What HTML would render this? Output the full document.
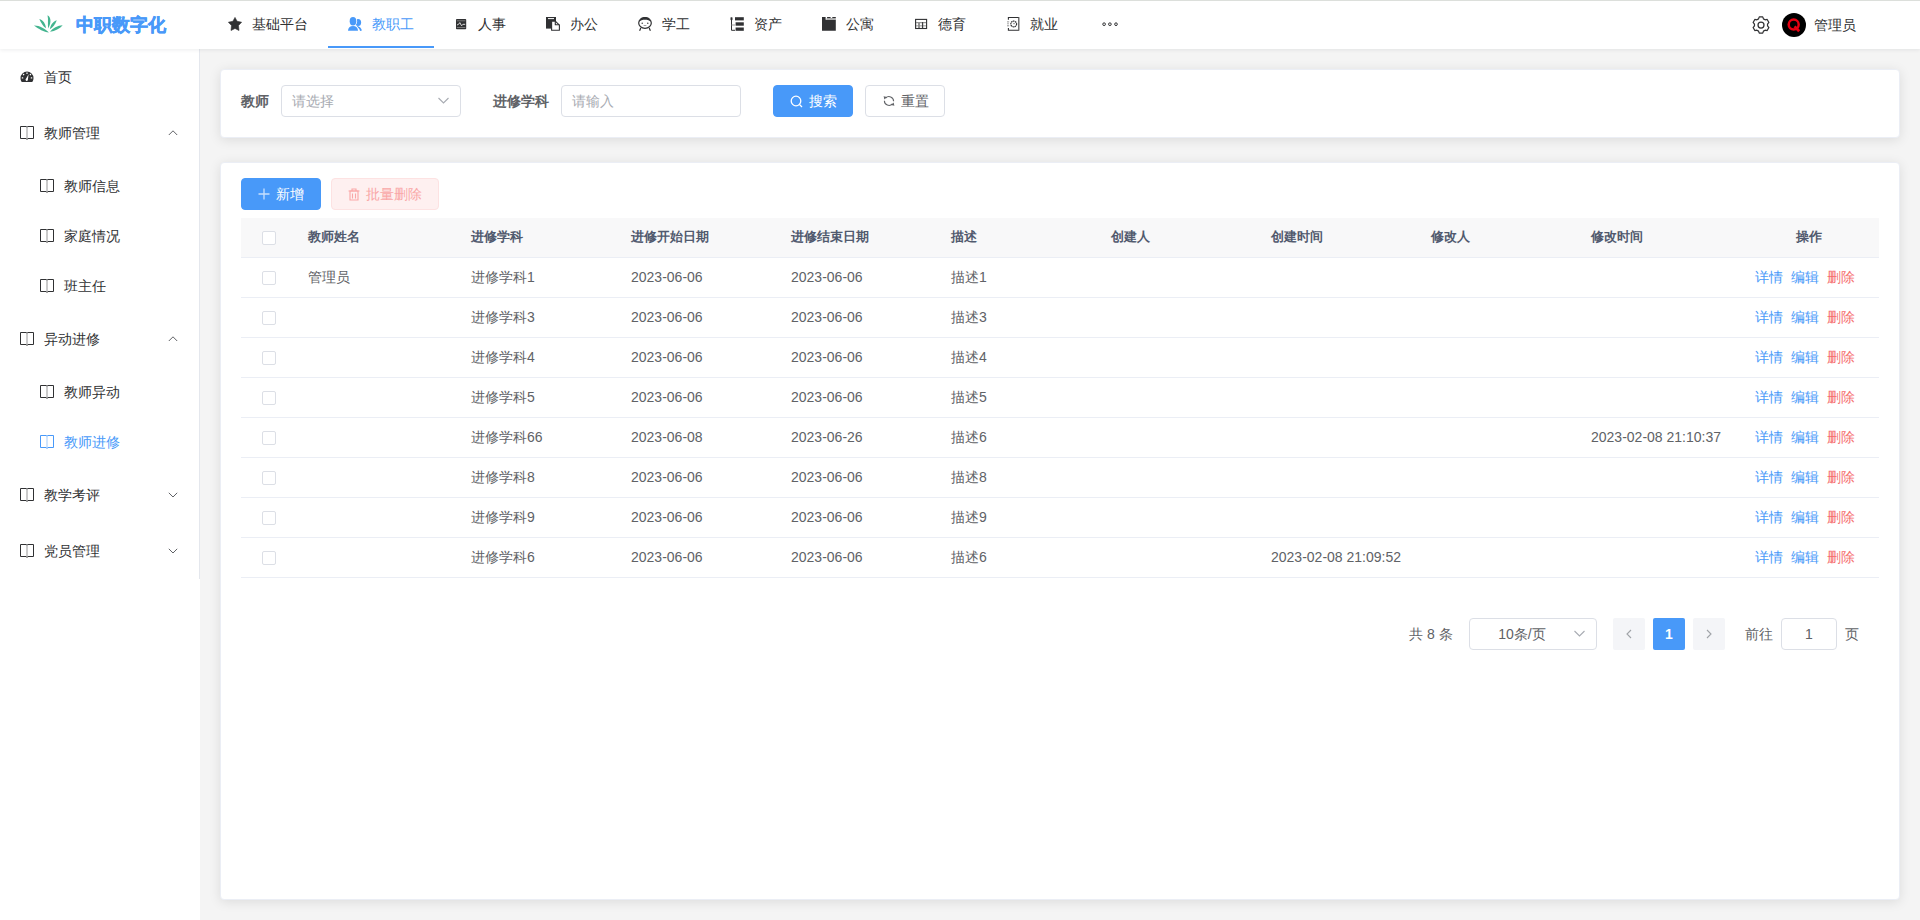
<!DOCTYPE html>
<html><head><meta charset="utf-8"><style>
*{box-sizing:border-box;margin:0;padding:0}
html,body{width:1920px;height:920px;overflow:hidden}
body{position:relative;font-family:"Liberation Sans",sans-serif;font-size:14px;color:#303133;background:#f4f4f4}
.abs{position:absolute}
#hdr{position:absolute;left:0;top:0;width:1920px;height:49px;background:#fff;border-top:1px solid #dcdfdb;box-shadow:0 1px 4px rgba(0,21,41,.08);z-index:3}
.logo-t{position:absolute;left:76px;top:12px;font-size:18px;font-weight:bold;color:#4899f9;line-height:24px;white-space:nowrap;-webkit-text-stroke:.5px #4899f9}
.nav{position:absolute;top:0;height:48px;white-space:nowrap;color:#303133}
.nav svg{position:absolute;top:16px;left:20px}
.nav .tx{position:absolute;left:44px;top:13px;line-height:20px}
.nav.act{color:#4899f9}
.nav.act:after{content:"";position:absolute;left:0;right:0;top:45px;height:2px;background:#4899f9}
#side{position:absolute;left:0;top:49px;width:200px;height:871px;background:#fff;z-index:2}
#side .bd{position:absolute;left:199px;top:0;width:1px;height:530px;background:#e4e7ed}
.mi{position:absolute;left:0;width:199px;white-space:nowrap;color:#303133}
.mi svg.ic{position:absolute;top:50%;margin-top:-7px}
.mi .tx{position:absolute;line-height:20px;top:50%;margin-top:-10px}
.mi svg.ar{position:absolute;left:168px;top:50%;margin-top:-4px}
.card{position:absolute;left:220px;width:1680px;background:#fff;border-radius:4px;border:1px solid #ebeef5;box-shadow:0 2px 12px 0 rgba(0,0,0,.1)}
.lbl{position:absolute;font-weight:bold;color:#606266;line-height:20px;white-space:nowrap}
.inp{position:absolute;height:32px;border:1px solid #dcdfe6;border-radius:4px;background:#fff;color:#a8abb2;line-height:30px;padding-left:10px;white-space:nowrap}
.btn{position:absolute;height:32px;border-radius:4px;line-height:30px;white-space:nowrap}
.th,.td,.lk{position:absolute;white-space:nowrap;line-height:20px}
.th{font-weight:bold;color:#515a6e;font-size:13px}
.td{color:#606266}
.cb{position:absolute;width:14px;height:14px;border:1px solid #dcdfe6;border-radius:2px;background:#fff}
.hl{position:absolute;left:241px;width:1638px;height:1px;background:#ebeef5}
</style></head><body>
<div id="hdr">
<svg style="position:absolute;left:30px;top:9px;" width="40" height="28" viewBox="0 0 40 28"><g fill="#43b48f">
<path d="M17.5 5.2C20.8 7 21.8 11.5 18.3 18.6C17.4 14.5 18.6 9.5 17.5 5.2Z"/>
<path d="M9.3 9.1C13.2 10.3 15.6 13.8 15.9 18.3C13.3 16.8 11.2 13.2 9.3 9.1Z"/>
<path d="M26.8 10.2C23.2 11.3 20.4 14.8 19.8 19.2C22.8 17.8 25.2 14.2 26.8 10.2Z"/>
<path d="M4 15.4C9.2 15.2 15.5 18.6 18.9 22.6C14 22 8.3 18.8 4 15.4Z"/>
<path d="M32.7 15.2C27.8 15.3 22.4 18.3 20.1 21.7C25.2 21.3 29.6 18.6 32.7 15.2Z"/></g></svg>
<div class="logo-t">中职数字化</div>
<div class="nav" style="left:208px;width:120px"><svg style="position:absolute;left:20px;top:15.5px;" width="14" height="14" viewBox="0 0 14 14"><path fill="#303133" stroke="#303133" stroke-width=".6" stroke-linejoin="round" d="M7 .4 9.1 4.3 13.6 5.2 10.5 8.6 11 13.5 7 11.4 3 13.5 3.5 8.6 .4 5.2 4.9 4.3Z"/></svg><span class="tx">基础平台</span></div>
<div class="nav act" style="left:328px;width:106px"><svg style="position:absolute;left:20px;top:15.5px;" width="14" height="14" viewBox="0 0 14 14"><g fill="#4899f9"><ellipse cx="10.1" cy="5.4" rx="3" ry="3.5"/><path d="M9.2 9C11.6 9.5 13.5 11.3 13.9 13.6L12.1 13.9C11.6 12 10.4 10.8 8.4 10.1Z"/></g><g fill="#fff"><ellipse cx="5" cy="4.3" rx="4.1" ry="5"/><path d="M-.8 14.5C-.8 10 1.6 8.1 5 8.1s5.8 1.9 5.8 6.4z"/></g><g fill="#4899f9"><ellipse cx="5" cy="4.3" rx="3.3" ry="4.2"/><path d="M0 13.8C0 10.6 2 8.9 5 8.9s5 1.7 5 4.9z"/></g></svg><span class="tx">教职工</span></div>
<div class="nav" style="left:434px;width:92px"><svg style="position:absolute;left:20px;top:15.5px;" width="14" height="14" viewBox="0 0 14 14"><rect x="2" y="2" width="10.2" height="10.2" rx=".8" fill="#303133"/><path d="M2.8 3.8h8.6M2.8 10.5h8.6" stroke="#aaa" stroke-width=".6"/><path d="M3 8 4.6 7.3 5.8 5.6 7.6 8.8 8.9 7.3 11.2 7.3" fill="none" stroke="#ddd" stroke-width="1"/></svg><span class="tx">人事</span></div>
<div class="nav" style="left:526px;width:92px"><svg style="position:absolute;left:20px;top:15.5px;" width="14" height="14" viewBox="0 0 14 14"><path fill="#303133" d="M0 0h10v11.6H0z"/><path d="M2 1.1h6v1H2z" fill="#fff"/><path d="M5.6 4.1h3.7l4.1 4.1v5H5.6z" fill="#fff" stroke="#303133" stroke-width="1.1" stroke-linejoin="round"/><path d="M9.3 4.1v3.6h4.1" fill="none" stroke="#303133" stroke-width="1.1"/></svg><span class="tx">办公</span></div>
<div class="nav" style="left:618px;width:92px"><svg style="position:absolute;left:20px;top:15.5px;" width="14" height="14" viewBox="0 0 14 14"><ellipse cx="7" cy="5.9" rx="6.3" ry="5.4" fill="none" stroke="#303133" stroke-width="1.2"/><path d="M.9 5C1.7 1.8 4 .5 7 .5s5.3 1.3 6.1 4.5C11.6 3.3 9.5 2.8 7 2.8S2.4 3.3.9 5z" fill="#303133"/><circle cx="4.2" cy="6.3" r=".7" fill="#303133"/><circle cx="9.8" cy="6.3" r=".7" fill="#303133"/><path d="M5.2 8.1c.7 1 2.9 1 3.6 0z" fill="#303133" opacity=".7"/><path d="M2.8 11 1.6 13.8M11.2 11l1.2 2.8" stroke="#303133" stroke-width="1.2"/></svg><span class="tx">学工</span></div>
<div class="nav" style="left:710px;width:92px"><svg style="position:absolute;left:20px;top:15.5px;" width="14" height="14" viewBox="0 0 14 14"><rect x=".5" y=".2" width="2" height="3" rx=".6" fill="#303133"/><path d="M1.5 3v10.3h3.5" fill="none" stroke="#303133" stroke-width="1"/><path d="M1.5 8h3.5" stroke="#999" stroke-width="1"/><rect x="5" y=".2" width="8.8" height="3.2" fill="#303133"/><rect x="5.6" y="5.3" width="8.2" height="3.4" fill="#303133"/><rect x="5.6" y="10.5" width="8.2" height="3.3" fill="#303133"/></svg><span class="tx">资产</span></div>
<div class="nav" style="left:802px;width:92px"><svg style="position:absolute;left:20px;top:15.5px;" width="14" height="14" viewBox="0 0 14 14"><path fill="#303133" d="M0 0h3.6v2.8h10.2V13.7H0z"/><path d="M4.6 1h9.2v1.8H4.6z" fill="#a8a8a8"/><path d="M5.1 0h3.5v1H5.1zM10.3 0h3.5v1h-3.5z" fill="#303133"/></svg><span class="tx">公寓</span></div>
<div class="nav" style="left:894px;width:92px"><svg style="position:absolute;left:20px;top:15.5px;" width="14" height="14" viewBox="0 0 14 14"><path d="M2.1 5.1h10v6H2.1z" fill="#8a8a8a"/><g fill="#fff"><rect x="2.1" y="6.2" width="2" height="2.2"/><rect x="5.9" y="6.2" width="2" height="2.2"/><rect x="9.2" y="6.2" width="2.9" height="2.2"/><rect x="2.1" y="9.3" width="2" height="1.8"/><rect x="5.9" y="9.3" width="2" height="1.8"/><rect x="9.2" y="9.3" width="2.9" height="1.8"/></g><path d="M8.6 5v6.2" stroke="#303133" stroke-width=".9"/><rect x="1.6" y="2.4" width="11" height="9.1" fill="none" stroke="#303133" stroke-width="1.1"/></svg><span class="tx">德育</span></div>
<div class="nav" style="left:986px;width:92px"><svg style="position:absolute;left:20px;top:15.5px;" width="14" height="14" viewBox="0 0 14 14"><path d="M2.4 2.8V.5h10.3v12.8H2.4V11" fill="none" stroke="#303133" stroke-width="1.1"/><path d="M12.7 .5v12.8" stroke="#777" stroke-width="1.1"/><path d="M1 4.9h2.2M1.2 6.8h1.6M1 8.8h2.2" stroke="#888" stroke-width=".9"/><circle cx="7.7" cy="7" r="2.9" fill="none" stroke="#303133" stroke-width="1.2" stroke-dasharray="1.6 .5"/><circle cx="8" cy="6.6" r=".8" fill="#888"/></svg><span class="tx">就业</span></div>
<div class="nav" style="left:1078px;width:64px"><svg style="position:absolute;left:20px;top:16px;" width="24" height="14" viewBox="0 0 24 14"><g fill="none" stroke="#303133" stroke-width="1"><circle cx="6.1" cy="7.2" r="1.35"/><circle cx="11.9" cy="7.2" r="1.35"/><circle cx="18" cy="7.2" r="1.35"/></g></svg></div>
<svg style="position:absolute;left:1752px;top:15px;" width="18" height="18" viewBox="0 0 18 18"><path fill="none" stroke="#303133" stroke-width="1.25" stroke-linejoin="round" d="M6.53 2.88 L7.27 0.88 L10.73 0.88 L11.47 2.88 L13.06 3.80 L15.17 3.45 L16.89 6.44 L15.54 8.08 L15.54 9.92 L16.89 11.56 L15.17 14.55 L13.06 14.20 L11.47 15.12 L10.73 17.12 L7.27 17.12 L6.53 15.12 L4.94 14.20 L2.83 14.55 L1.11 11.56 L2.46 9.92 L2.46 8.08 L1.11 6.44 L2.83 3.45 L4.94 3.80Z"/><circle cx="9" cy="9" r="3" fill="none" stroke="#303133" stroke-width="1.25"/></svg>
<div class="abs" style="left:1782px;top:12px;width:24px;height:24px;border-radius:50%;background:#000"></div>
<svg style="position:absolute;left:1786px;top:16px;" width="16" height="16" viewBox="0 0 16 16"><circle cx="7.7" cy="7.6" r="5" fill="none" stroke="#e60012" stroke-width="2.5"/><path d="M8.6 9.4 13.2 14.2" stroke="#e60012" stroke-width="2.8"/></svg>
<div class="abs" style="left:1814px;top:14px;line-height:20px;color:#303133;white-space:nowrap">管理员</div>
</div>
<div id="side"><div class="bd"></div>
<div class="mi" style="top:0px;height:56px;color:#303133"><svg class="ic" style="position:absolute;left:20px;top:Nonepx;left:20px;" width="14" height="14" viewBox="0 0 14 14"><path d="M7 1.5A6.5 6.5 0 0 0 .5 8c0 1.6.5 3 1.3 4h10.4c.8-1 1.3-2.4 1.3-4A6.5 6.5 0 0 0 7 1.5z" fill="#303133"/><g fill="#fff"><rect x="6.2" y="2.6" width="1.6" height="1.2" rx=".5"/><circle cx="3.6" cy="4.6" r=".8"/><circle cx="10.4" cy="4.6" r=".8"/><rect x="1.7" y="7.2" width="1.6" height="1.2" rx=".5"/><rect x="10.7" y="7.2" width="1.6" height="1.2" rx=".5"/><path d="M8.6 4.3 7.9 9.4a1.2 1.2 0 1 1-1.9-.6z"/></g></svg><span class="tx" style="left:44px">首页</span></div>
<div class="mi" style="top:56px;height:56px;color:#303133"><svg class="ic" style="position:absolute;left:20px;top:Nonepx;left:20px;" width="14" height="14" viewBox="0 0 14 14"><path d="M.5 .5H6.2L7 1.2 7.8.5H13.5V12.5H7.8L7 13.5 6.2 12.5H.5Z" fill="none" stroke="#303133" stroke-width="1" stroke-linejoin="miter"/><path d="M7 1.2v11.3" stroke="#303133" stroke-width="1" opacity=".5"/></svg><span class="tx" style="left:44px">教师管理</span><svg class="ar" style="position:absolute;left:168px;top:Nonepx;" width="10" height="8" viewBox="0 0 10 8"><path d="M.8 6 5 1.8 9.2 6" fill="none" stroke="#606266" stroke-width="1"/></svg></div>
<div class="mi" style="top:112px;height:50px;color:#303133"><svg class="ic" style="position:absolute;left:40px;top:Nonepx;left:40px;" width="14" height="14" viewBox="0 0 14 14"><path d="M.5 .5H6.2L7 1.2 7.8.5H13.5V12.5H7.8L7 13.5 6.2 12.5H.5Z" fill="none" stroke="#303133" stroke-width="1" stroke-linejoin="miter"/><path d="M7 1.2v11.3" stroke="#303133" stroke-width="1" opacity=".5"/></svg><span class="tx" style="left:64px">教师信息</span></div>
<div class="mi" style="top:162px;height:50px;color:#303133"><svg class="ic" style="position:absolute;left:40px;top:Nonepx;left:40px;" width="14" height="14" viewBox="0 0 14 14"><path d="M.5 .5H6.2L7 1.2 7.8.5H13.5V12.5H7.8L7 13.5 6.2 12.5H.5Z" fill="none" stroke="#303133" stroke-width="1" stroke-linejoin="miter"/><path d="M7 1.2v11.3" stroke="#303133" stroke-width="1" opacity=".5"/></svg><span class="tx" style="left:64px">家庭情况</span></div>
<div class="mi" style="top:212px;height:50px;color:#303133"><svg class="ic" style="position:absolute;left:40px;top:Nonepx;left:40px;" width="14" height="14" viewBox="0 0 14 14"><path d="M.5 .5H6.2L7 1.2 7.8.5H13.5V12.5H7.8L7 13.5 6.2 12.5H.5Z" fill="none" stroke="#303133" stroke-width="1" stroke-linejoin="miter"/><path d="M7 1.2v11.3" stroke="#303133" stroke-width="1" opacity=".5"/></svg><span class="tx" style="left:64px">班主任</span></div>
<div class="mi" style="top:262px;height:56px;color:#303133"><svg class="ic" style="position:absolute;left:20px;top:Nonepx;left:20px;" width="14" height="14" viewBox="0 0 14 14"><path d="M.5 .5H6.2L7 1.2 7.8.5H13.5V12.5H7.8L7 13.5 6.2 12.5H.5Z" fill="none" stroke="#303133" stroke-width="1" stroke-linejoin="miter"/><path d="M7 1.2v11.3" stroke="#303133" stroke-width="1" opacity=".5"/></svg><span class="tx" style="left:44px">异动进修</span><svg class="ar" style="position:absolute;left:168px;top:Nonepx;" width="10" height="8" viewBox="0 0 10 8"><path d="M.8 6 5 1.8 9.2 6" fill="none" stroke="#606266" stroke-width="1"/></svg></div>
<div class="mi" style="top:318px;height:50px;color:#303133"><svg class="ic" style="position:absolute;left:40px;top:Nonepx;left:40px;" width="14" height="14" viewBox="0 0 14 14"><path d="M.5 .5H6.2L7 1.2 7.8.5H13.5V12.5H7.8L7 13.5 6.2 12.5H.5Z" fill="none" stroke="#303133" stroke-width="1" stroke-linejoin="miter"/><path d="M7 1.2v11.3" stroke="#303133" stroke-width="1" opacity=".5"/></svg><span class="tx" style="left:64px">教师异动</span></div>
<div class="mi" style="top:368px;height:50px;color:#4899f9"><svg class="ic" style="position:absolute;left:40px;top:Nonepx;left:40px;" width="14" height="14" viewBox="0 0 14 14"><path d="M.5 .5H6.2L7 1.2 7.8.5H13.5V12.5H7.8L7 13.5 6.2 12.5H.5Z" fill="none" stroke="#4899f9" stroke-width="1" stroke-linejoin="miter"/><path d="M7 1.2v11.3" stroke="#4899f9" stroke-width="1" opacity=".5"/></svg><span class="tx" style="left:64px">教师进修</span></div>
<div class="mi" style="top:418px;height:56px;color:#303133"><svg class="ic" style="position:absolute;left:20px;top:Nonepx;left:20px;" width="14" height="14" viewBox="0 0 14 14"><path d="M.5 .5H6.2L7 1.2 7.8.5H13.5V12.5H7.8L7 13.5 6.2 12.5H.5Z" fill="none" stroke="#303133" stroke-width="1" stroke-linejoin="miter"/><path d="M7 1.2v11.3" stroke="#303133" stroke-width="1" opacity=".5"/></svg><span class="tx" style="left:44px">教学考评</span><svg class="ar" style="position:absolute;left:168px;top:Nonepx;" width="10" height="8" viewBox="0 0 10 8"><path d="M.8 1.8 5 6 9.2 1.8" fill="none" stroke="#606266" stroke-width="1"/></svg></div>
<div class="mi" style="top:474px;height:56px;color:#303133"><svg class="ic" style="position:absolute;left:20px;top:Nonepx;left:20px;" width="14" height="14" viewBox="0 0 14 14"><path d="M.5 .5H6.2L7 1.2 7.8.5H13.5V12.5H7.8L7 13.5 6.2 12.5H.5Z" fill="none" stroke="#303133" stroke-width="1" stroke-linejoin="miter"/><path d="M7 1.2v11.3" stroke="#303133" stroke-width="1" opacity=".5"/></svg><span class="tx" style="left:44px">党员管理</span><svg class="ar" style="position:absolute;left:168px;top:Nonepx;" width="10" height="8" viewBox="0 0 10 8"><path d="M.8 1.8 5 6 9.2 1.8" fill="none" stroke="#606266" stroke-width="1"/></svg></div>
</div>
<div class="card" style="top:69px;height:69px">
<div class="lbl" style="left:20px;top:21px">教师</div>
<div class="inp" style="left:60px;top:15px;width:180px">请选择<svg style="position:absolute;left:156px;top:11px;" width="11" height="8" viewBox="0 0 11 8"><path d="M.5 1 5.5 6 10.5 1" fill="none" stroke="#a8abb2" stroke-width="1.1"/></svg></div>
<div class="lbl" style="left:272px;top:21px">进修学科</div>
<div class="inp" style="left:340px;top:15px;width:180px">请输入</div>
<div class="btn" style="left:552px;top:15px;width:80px;background:#4899f9;border:1px solid #4899f9;color:#fff"><svg style="position:absolute;left:16px;top:9px;" width="13" height="13" viewBox="0 0 13 13"><circle cx="6" cy="6" r="4.8" fill="none" stroke="#fff" stroke-width="1.3"/><path d="M9.5 9.5 12 12" stroke="#fff" stroke-width="1.3"/></svg><span class="abs" style="left:35px;top:0">搜索</span></div>
<div class="btn" style="left:644px;top:15px;width:80px;background:#fff;border:1px solid #dcdfe6;color:#606266"><svg style="position:absolute;left:17px;top:9px;" width="12" height="12" viewBox="0 0 12 12"><path d="M10.6 6.3A4.6 4.6 0 0 0 2.6 3.1M1.4 5.7A4.6 4.6 0 0 0 9.4 8.9" fill="none" stroke="#606266" stroke-width="1.1"/><path d="M.6 1.2 4 2 1.4 4.6Z M11.4 10.8 8 10 10.6 7.4Z" fill="#606266"/></svg><span class="abs" style="left:35px;top:0">重置</span></div>
</div>
<div class="card" style="top:162px;height:738px"></div>
<div class="btn" style="left:241px;top:178px;width:80px;background:#4899f9;border:1px solid #4899f9;color:#fff"><svg style="position:absolute;left:16px;top:9px;" width="12" height="12" viewBox="0 0 12 12"><path d="M6 .5v11M.5 6h11" stroke="#c8e0fd" stroke-width="1.3"/></svg><span class="abs" style="left:34px;top:0">新增</span></div>
<div class="btn" style="left:331px;top:178px;width:108px;background:#fef0f0;border:1px solid #fde2e2;color:#f9a7a7"><svg style="position:absolute;left:16px;top:9px;" width="12" height="13" viewBox="0 0 12 13"><path d="M2 3h8v9H2z M4.5 5.5v5M7.5 5.5v5" fill="none" stroke="#f9a7a7" stroke-width="1.1"/><path d="M.5 3h11M4 3V1h4v2" fill="none" stroke="#f9a7a7" stroke-width="1.1"/></svg><span class="abs" style="left:34px;top:0">批量删除</span></div>
<div class="abs" style="left:241px;top:218px;width:1638px;height:40px;background:#f8f8f9"></div>
<div class="cb" style="left:262px;top:231px"></div>
<div class="th" style="left:308px;top:227px">教师姓名</div>
<div class="th" style="left:471px;top:227px">进修学科</div>
<div class="th" style="left:631px;top:227px">进修开始日期</div>
<div class="th" style="left:791px;top:227px">进修结束日期</div>
<div class="th" style="left:951px;top:227px">描述</div>
<div class="th" style="left:1111px;top:227px">创建人</div>
<div class="th" style="left:1271px;top:227px">创建时间</div>
<div class="th" style="left:1431px;top:227px">修改人</div>
<div class="th" style="left:1591px;top:227px">修改时间</div>
<div class="th" style="left:1796px;top:227px">操作</div>
<div class="hl" style="top:257px"></div>
<div class="cb" style="left:262px;top:271px"></div>
<div class="td" style="left:308px;top:267px">管理员</div>
<div class="td" style="left:471px;top:267px">进修学科1</div>
<div class="td" style="left:631px;top:267px">2023-06-06</div>
<div class="td" style="left:791px;top:267px">2023-06-06</div>
<div class="td" style="left:951px;top:267px">描述1</div>
<div class="lk" style="left:1755px;top:267px;color:#4899f9">详情</div>
<div class="lk" style="left:1791px;top:267px;color:#4899f9">编辑</div>
<div class="lk" style="left:1827px;top:267px;color:#f56c6c">删除</div>
<div class="hl" style="top:297px"></div>
<div class="cb" style="left:262px;top:311px"></div>
<div class="td" style="left:471px;top:307px">进修学科3</div>
<div class="td" style="left:631px;top:307px">2023-06-06</div>
<div class="td" style="left:791px;top:307px">2023-06-06</div>
<div class="td" style="left:951px;top:307px">描述3</div>
<div class="lk" style="left:1755px;top:307px;color:#4899f9">详情</div>
<div class="lk" style="left:1791px;top:307px;color:#4899f9">编辑</div>
<div class="lk" style="left:1827px;top:307px;color:#f56c6c">删除</div>
<div class="hl" style="top:337px"></div>
<div class="cb" style="left:262px;top:351px"></div>
<div class="td" style="left:471px;top:347px">进修学科4</div>
<div class="td" style="left:631px;top:347px">2023-06-06</div>
<div class="td" style="left:791px;top:347px">2023-06-06</div>
<div class="td" style="left:951px;top:347px">描述4</div>
<div class="lk" style="left:1755px;top:347px;color:#4899f9">详情</div>
<div class="lk" style="left:1791px;top:347px;color:#4899f9">编辑</div>
<div class="lk" style="left:1827px;top:347px;color:#f56c6c">删除</div>
<div class="hl" style="top:377px"></div>
<div class="cb" style="left:262px;top:391px"></div>
<div class="td" style="left:471px;top:387px">进修学科5</div>
<div class="td" style="left:631px;top:387px">2023-06-06</div>
<div class="td" style="left:791px;top:387px">2023-06-06</div>
<div class="td" style="left:951px;top:387px">描述5</div>
<div class="lk" style="left:1755px;top:387px;color:#4899f9">详情</div>
<div class="lk" style="left:1791px;top:387px;color:#4899f9">编辑</div>
<div class="lk" style="left:1827px;top:387px;color:#f56c6c">删除</div>
<div class="hl" style="top:417px"></div>
<div class="cb" style="left:262px;top:431px"></div>
<div class="td" style="left:471px;top:427px">进修学科66</div>
<div class="td" style="left:631px;top:427px">2023-06-08</div>
<div class="td" style="left:791px;top:427px">2023-06-26</div>
<div class="td" style="left:951px;top:427px">描述6</div>
<div class="td" style="left:1591px;top:427px">2023-02-08 21:10:37</div>
<div class="lk" style="left:1755px;top:427px;color:#4899f9">详情</div>
<div class="lk" style="left:1791px;top:427px;color:#4899f9">编辑</div>
<div class="lk" style="left:1827px;top:427px;color:#f56c6c">删除</div>
<div class="hl" style="top:457px"></div>
<div class="cb" style="left:262px;top:471px"></div>
<div class="td" style="left:471px;top:467px">进修学科8</div>
<div class="td" style="left:631px;top:467px">2023-06-06</div>
<div class="td" style="left:791px;top:467px">2023-06-06</div>
<div class="td" style="left:951px;top:467px">描述8</div>
<div class="lk" style="left:1755px;top:467px;color:#4899f9">详情</div>
<div class="lk" style="left:1791px;top:467px;color:#4899f9">编辑</div>
<div class="lk" style="left:1827px;top:467px;color:#f56c6c">删除</div>
<div class="hl" style="top:497px"></div>
<div class="cb" style="left:262px;top:511px"></div>
<div class="td" style="left:471px;top:507px">进修学科9</div>
<div class="td" style="left:631px;top:507px">2023-06-06</div>
<div class="td" style="left:791px;top:507px">2023-06-06</div>
<div class="td" style="left:951px;top:507px">描述9</div>
<div class="lk" style="left:1755px;top:507px;color:#4899f9">详情</div>
<div class="lk" style="left:1791px;top:507px;color:#4899f9">编辑</div>
<div class="lk" style="left:1827px;top:507px;color:#f56c6c">删除</div>
<div class="hl" style="top:537px"></div>
<div class="cb" style="left:262px;top:551px"></div>
<div class="td" style="left:471px;top:547px">进修学科6</div>
<div class="td" style="left:631px;top:547px">2023-06-06</div>
<div class="td" style="left:791px;top:547px">2023-06-06</div>
<div class="td" style="left:951px;top:547px">描述6</div>
<div class="td" style="left:1271px;top:547px">2023-02-08 21:09:52</div>
<div class="lk" style="left:1755px;top:547px;color:#4899f9">详情</div>
<div class="lk" style="left:1791px;top:547px;color:#4899f9">编辑</div>
<div class="lk" style="left:1827px;top:547px;color:#f56c6c">删除</div>
<div class="hl" style="top:577px"></div>
<div class="td" style="left:1409px;top:624px">共 8 条</div>
<div class="inp" style="left:1469px;top:618px;width:128px;color:#606266;text-align:center;padding:0 22px 0 0">10条/页<svg style="position:absolute;left:104px;top:11px;" width="11" height="8" viewBox="0 0 11 8"><path d="M.5 1 5.5 6 10.5 1" fill="none" stroke="#a8abb2" stroke-width="1.1"/></svg></div>
<div class="abs" style="left:1613px;top:618px;width:32px;height:32px;background:#f4f5f8;border-radius:2px"></div>
<svg style="position:absolute;left:1625px;top:629px;" width="8" height="10" viewBox="0 0 8 10"><path d="M6 1 2 5l4 4" fill="none" stroke="#a0a3a8" stroke-width="1.1"/></svg>
<div class="abs" style="left:1653px;top:618px;width:32px;height:32px;background:#4899f9;border-radius:2px;color:#fff;font-weight:bold;text-align:center;line-height:32px">1</div>
<div class="abs" style="left:1693px;top:618px;width:32px;height:32px;background:#f4f5f8;border-radius:2px"></div>
<svg style="position:absolute;left:1705px;top:629px;" width="8" height="10" viewBox="0 0 8 10"><path d="M2 1l4 4-4 4" fill="none" stroke="#a0a3a8" stroke-width="1.1"/></svg>
<div class="td" style="left:1745px;top:624px">前往</div>
<div class="inp" style="left:1781px;top:618px;width:56px;color:#606266;text-align:center;padding:0">1</div>
<div class="td" style="left:1845px;top:624px">页</div>
</body></html>
